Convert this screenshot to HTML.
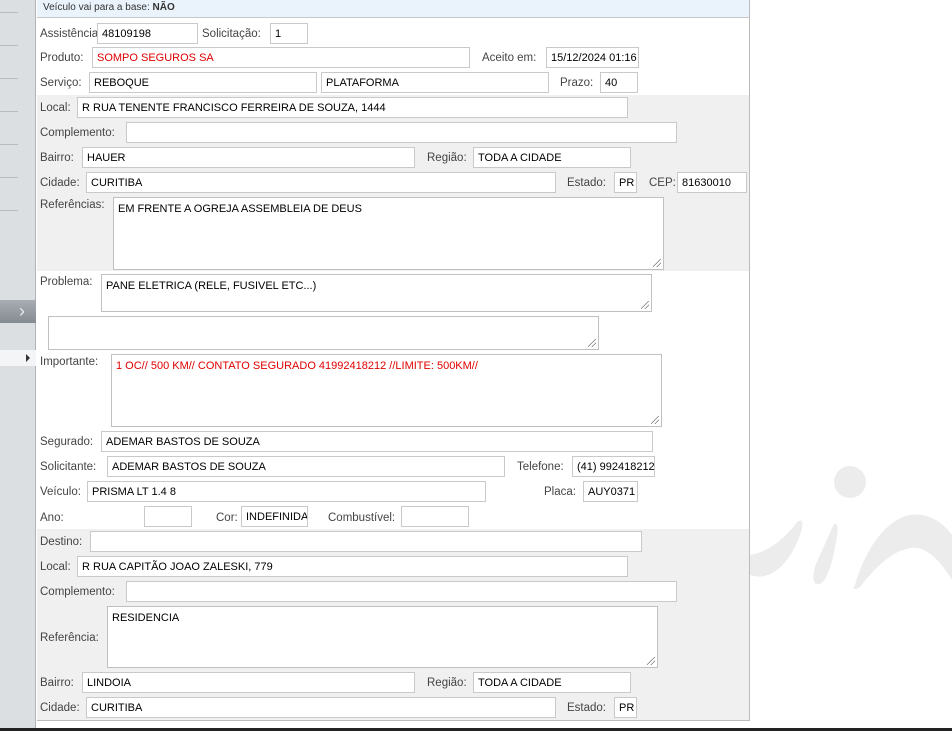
<!DOCTYPE html>
<html><head><meta charset="utf-8"><style>
*{margin:0;padding:0;box-sizing:border-box}
body{width:952px;height:731px;position:relative;overflow:hidden;background:#fff;font-family:"Liberation Sans",Tahoma,sans-serif;}
.a{position:absolute}
.l{position:absolute;font-size:11.5px;color:#444;white-space:nowrap;line-height:14px}
.i{position:absolute;height:21px;border:1px solid #c9c9c9;background:#fff;font-size:11px;color:#000;padding:4px 0 0 4px;white-space:nowrap;overflow:hidden;line-height:13px}
.t{position:absolute;border:1px solid #c0c0c0;background:#fff;font-size:11px;color:#000;padding:5px 4px;line-height:13px}
.t:after{content:"";position:absolute;right:2px;bottom:2px;width:8px;height:8px;background:linear-gradient(135deg,transparent 45%,#777 45%,#777 52%,transparent 52%,transparent 70%,#777 70%,#777 77%,transparent 77%)}
.r{color:#e00000}
.sl{position:absolute;left:0;width:18px;height:1px;background:#b8bcc0}
</style></head><body>
<div class="a" style="left:0;top:0;width:36px;height:731px;background:#dcdfe2;border-right:1px solid #b0b4b8"></div>
<div class="sl" style="top:12px"></div><div class="sl" style="top:45px"></div><div class="sl" style="top:78px"></div><div class="sl" style="top:111px"></div><div class="sl" style="top:144px"></div><div class="sl" style="top:177px"></div><div class="sl" style="top:210px"></div>
<div class="a" style="left:0;top:300px;width:36px;height:23px;background:linear-gradient(#a8adb3,#858b92);color:#e8eaec;font-size:18px;text-align:center;line-height:22px;padding-left:8px">&#8250;</div>
<div class="a" style="left:0;top:350px;width:36px;height:16px;background:#f4f5f6"></div>
<div class="a" style="left:26px;top:354px;width:0;height:0;border-left:4px solid #333;border-top:4px solid transparent;border-bottom:4px solid transparent"></div>
<svg class="a" style="left:700px;top:440px" width="252" height="291" viewBox="0 0 252 291">
<circle cx="150" cy="42" r="16" fill="#ececec"/>
<path d="M50 115 C70 112 88 95 97 82 C102 78 104 82 101 92 C90 125 70 142 50 135 Z" fill="#ececec"/>
<path d="M133 86 C136 80 139 86 137 96 C133 120 128 140 120 144 C112 146 112 136 116 124 Z" fill="#ececec"/>
<path d="M155 145 C165 110 185 80 210 75 C230 72 245 85 252 95 L252 140 C240 120 225 105 210 108 C190 112 175 128 160 147 C155 150 152 150 155 145 Z" fill="#ececec"/>
</svg>
<div class="a" style="left:37px;top:0;width:713px;height:721px;border-right:1px solid #bbb;border-bottom:1px solid #bbb;background:#fff"></div>
<div class="a" style="left:37px;top:0;width:712px;height:18px;background:#eaf3fc;border-bottom:1px solid #c8c8c8"></div>
<div class="a" style="left:43px;top:2px;font-size:10px;color:#333">Veículo vai para a base: <b>NÃO</b></div>
<div class="a" style="left:37px;top:95px;width:712px;height:176px;background:#f0f0f0"></div>
<div class="a" style="left:37px;top:529px;width:712px;height:191px;background:#f0f0f0"></div>
<div class="a" style="left:0;top:728px;width:952px;height:3px;background:#222"></div>

<div class="l" style="left:40px;top:27px">Assistência:</div><div class="i" style="left:97px;top:23px;width:101px">48109198</div>
<div class="l" style="left:202px;top:27px">Solicitação:</div><div class="i" style="left:270px;top:23px;width:38px">1</div>
<div class="l" style="left:40px;top:51px">Produto:</div><div class="i r" style="left:92px;top:47px;width:378px">SOMPO SEGUROS SA</div>
<div class="l" style="left:482px;top:51px">Aceito em:</div><div class="i" style="left:546px;top:47px;width:93px">15/12/2024 01:16</div>
<div class="l" style="left:40px;top:76px">Serviço:</div><div class="i" style="left:89px;top:72px;width:228px">REBOQUE</div>
<div class="i" style="left:321px;top:72px;width:228px">PLATAFORMA</div>
<div class="l" style="left:560px;top:76px">Prazo:</div><div class="i" style="left:600px;top:72px;width:38px">40</div>

<div class="l" style="left:40px;top:101px">Local:</div><div class="i" style="left:77px;top:97px;width:551px">R RUA TENENTE FRANCISCO FERREIRA DE SOUZA, 1444</div>
<div class="l" style="left:40px;top:126px">Complemento:</div><div class="i" style="left:126px;top:122px;width:551px"></div>
<div class="l" style="left:40px;top:151px">Bairro:</div><div class="i" style="left:82px;top:147px;width:333px">HAUER</div>
<div class="l" style="left:427px;top:151px">Região:</div><div class="i" style="left:473px;top:147px;width:158px">TODA A CIDADE</div>
<div class="l" style="left:40px;top:176px">Cidade:</div><div class="i" style="left:86px;top:172px;width:470px">CURITIBA</div>
<div class="l" style="left:567px;top:176px">Estado:</div><div class="i" style="left:614px;top:172px;width:23px">PR</div>
<div class="l" style="left:649px;top:176px">CEP:</div><div class="i" style="left:677px;top:172px;width:70px">81630010</div>
<div class="l" style="left:40px;top:198px">Referências:</div><div class="t" style="left:113px;top:197px;width:551px;height:73px">EM FRENTE A OGREJA ASSEMBLEIA DE DEUS</div>

<div class="l" style="left:40px;top:275px">Problema:</div><div class="t" style="left:101px;top:274px;width:551px;height:38px">PANE ELETRICA (RELE, FUSIVEL ETC...)</div>
<div class="t" style="left:48px;top:316px;width:551px;height:34px"></div>
<div class="l" style="left:40px;top:355px">Importante:</div><div class="t r" style="left:111px;top:354px;width:551px;height:73px">1 OC// 500 KM// CONTATO SEGURADO 41992418212 //LIMITE: 500KM//</div>

<div class="l" style="left:40px;top:435px">Segurado:</div><div class="i" style="left:101px;top:431px;width:552px">ADEMAR BASTOS DE SOUZA</div>
<div class="l" style="left:40px;top:460px">Solicitante:</div><div class="i" style="left:107px;top:456px;width:398px">ADEMAR BASTOS DE SOUZA</div>
<div class="l" style="left:517px;top:460px">Telefone:</div><div class="i" style="left:572px;top:456px;width:83px">(41) 992418212</div>
<div class="l" style="left:40px;top:485px">Veículo:</div><div class="i" style="left:87px;top:481px;width:399px">PRISMA LT 1.4 8</div>
<div class="l" style="left:544px;top:485px">Placa:</div><div class="i" style="left:583px;top:481px;width:55px">AUY0371</div>
<div class="l" style="left:40px;top:511px">Ano:</div><div class="i" style="left:144px;top:506px;width:48px"></div>
<div class="l" style="left:216px;top:511px">Cor:</div><div class="i" style="left:241px;top:506px;width:67px">INDEFINIDA</div>
<div class="l" style="left:328px;top:511px">Combustível:</div><div class="i" style="left:401px;top:506px;width:68px"></div>

<div class="l" style="left:40px;top:535px">Destino:</div><div class="i" style="left:90px;top:531px;width:552px"></div>
<div class="l" style="left:40px;top:560px">Local:</div><div class="i" style="left:77px;top:556px;width:551px">R RUA CAPITÃO JOAO ZALESKI, 779</div>
<div class="l" style="left:40px;top:585px">Complemento:</div><div class="i" style="left:126px;top:581px;width:551px"></div>
<div class="l" style="left:40px;top:631px">Referência:</div><div class="t" style="left:107px;top:606px;width:551px;height:62px">RESIDENCIA</div>
<div class="l" style="left:40px;top:676px">Bairro:</div><div class="i" style="left:82px;top:672px;width:333px">LINDOIA</div>
<div class="l" style="left:427px;top:676px">Região:</div><div class="i" style="left:473px;top:672px;width:158px">TODA A CIDADE</div>
<div class="l" style="left:40px;top:701px">Cidade:</div><div class="i" style="left:86px;top:697px;width:470px">CURITIBA</div>
<div class="l" style="left:567px;top:701px">Estado:</div><div class="i" style="left:614px;top:697px;width:23px">PR</div>
</body></html>
